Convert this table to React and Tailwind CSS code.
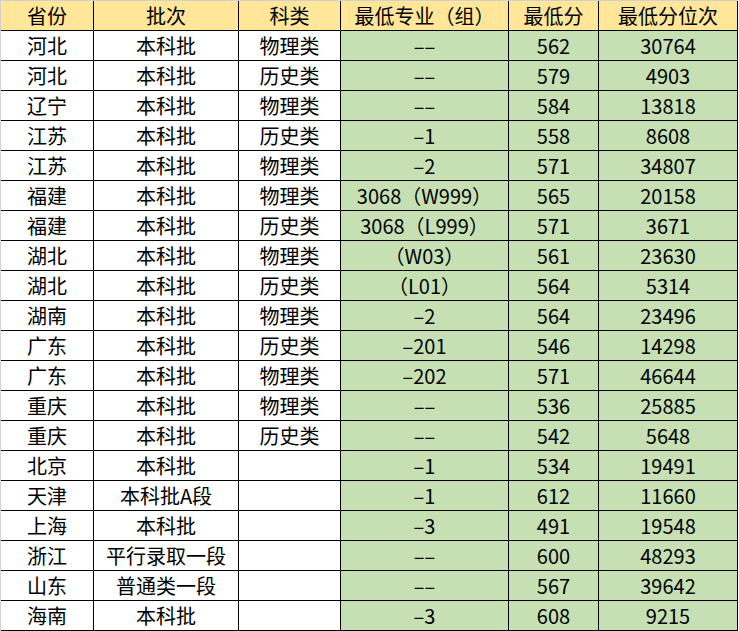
import React from 'react'

const rows = [
  ['河北', '本科批', '物理类', '––', '562', '30764'],
  ['河北', '本科批', '历史类', '––', '579', '4903'],
  ['辽宁', '本科批', '物理类', '––', '584', '13818'],
  ['江苏', '本科批', '历史类', '–1', '558', '8608'],
  ['江苏', '本科批', '物理类', '–2', '571', '34807'],
  ['福建', '本科批', '物理类', '3068（W999）', '565', '20158'],
  ['福建', '本科批', '历史类', '3068（L999）', '571', '3671'],
  ['湖北', '本科批', '物理类', '（W03）', '561', '23630'],
  ['湖北', '本科批', '历史类', '（L01）', '564', '5314'],
  ['湖南', '本科批', '物理类', '–2', '564', '23496'],
  ['广东', '本科批', '历史类', '–201', '546', '14298'],
  ['广东', '本科批', '物理类', '–202', '571', '46644'],
  ['重庆', '本科批', '物理类', '––', '536', '25885'],
  ['重庆', '本科批', '历史类', '––', '542', '5648'],
  ['北京', '本科批', '', '–1', '534', '19491'],
  ['天津', '本科批A段', '', '–1', '612', '11660'],
  ['上海', '本科批', '', '–3', '491', '19548'],
  ['浙江', '平行录取一段', '', '––', '600', '48293'],
  ['山东', '普通类一段', '', '––', '567', '39642'],
  ['海南', '本科批', '', '–3', '608', '9215'],
]

const headers = ['省份', '批次', '科类', '最低专业（组）', '最低分', '最低分位次']

const cell = 'h-[30px] flex items-center justify-center border-r border-b border-black whitespace-nowrap'

const App = () => {
  return (
    <div className="w-[739px] h-[631px] bg-white font-['Noto_Sans_CJK_SC',sans-serif] text-[20px] text-black">
      <div className="w-[738px] border-l border-t border-[#d0d0d0] grid grid-cols-[93px_145px_102px_168px_90px_139px]">
        {headers.map((h) => (
          <div key={h} className={`${cell} bg-[#ffe699]`}>{h}</div>
        ))}
        {rows.map((r, i) =>
          r.map((v, j) => (
            <div
              key={`${i}-${j}`}
              className={`${cell} ${j >= 3 ? 'bg-[#c6e0b4]' : 'bg-white'}`}
            >
              {v}
            </div>
          ))
        )}
      </div>
    </div>
  )
}

export default App
